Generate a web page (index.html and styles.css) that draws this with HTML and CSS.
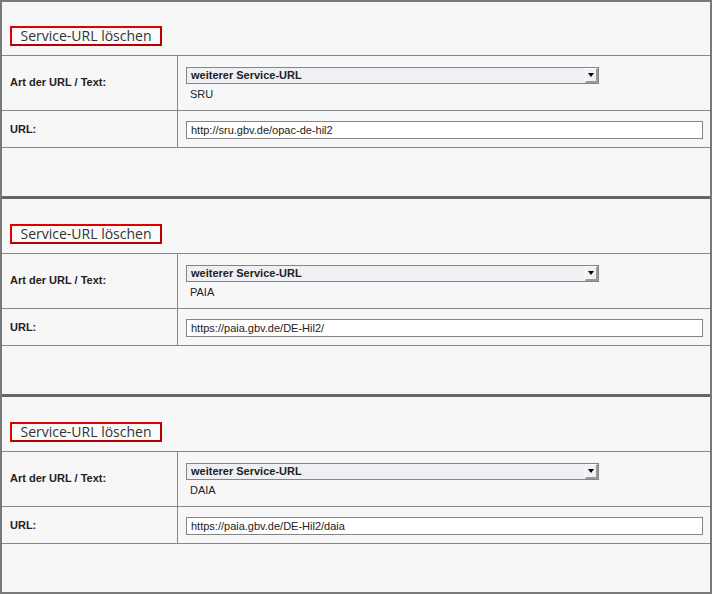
FILE: index.html
```html
<!DOCTYPE html>
<html>
<head>
<meta charset="utf-8">
<link rel="stylesheet" href="styles.css">
</head>
<body>
<div class="frame">
  <div class="section">
    <div class="btn-row"><button class="del-btn">Service-URL löschen</button></div>
    <div class="grid">
      <div class="label row1">Art der URL / Text:</div>
      <div class="field row1">
        <div class="select"><span class="select-text">weiterer Service-URL</span><span class="arrow"></span></div>
        <div class="subtext">SRU</div>
      </div>
      <div class="label row2">URL:</div>
      <div class="field row2"><div class="input">http://sru.gbv.de/opac-de-hil2</div></div>
    </div>
  </div>
  <div class="section">
    <div class="btn-row"><button class="del-btn">Service-URL löschen</button></div>
    <div class="grid">
      <div class="label row1">Art der URL / Text:</div>
      <div class="field row1">
        <div class="select"><span class="select-text">weiterer Service-URL</span><span class="arrow"></span></div>
        <div class="subtext">PAIA</div>
      </div>
      <div class="label row2">URL:</div>
      <div class="field row2"><div class="input">https://paia.gbv.de/DE-Hil2/</div></div>
    </div>
  </div>
  <div class="section last">
    <div class="btn-row"><button class="del-btn">Service-URL löschen</button></div>
    <div class="grid">
      <div class="label row1">Art der URL / Text:</div>
      <div class="field row1">
        <div class="select"><span class="select-text">weiterer Service-URL</span><span class="arrow"></span></div>
        <div class="subtext">DAIA</div>
      </div>
      <div class="label row2">URL:</div>
      <div class="field row2"><div class="input">https://paia.gbv.de/DE-Hil2/daia</div></div>
    </div>
  </div>
</div>
</body>
</html>
```
FILE: styles.css
```css
html, body {
  margin: 0;
  padding: 0;
  background: #f7f7f7;
}
.frame {
  width: 712px;
  height: 594px;
  box-sizing: border-box;
  border: 2px solid #7a7a7a;
  background: #f7f7f7;
  font-family: "Liberation Sans", Arial, sans-serif;
  overflow: hidden;
}
.section {
  height: 194px;
  border-bottom: 3px solid #666;
}
.section + .section {
  height: 195px;
}
.section.last {
  border-bottom: none;
}
.btn-row {
  padding: 24px 0 0 8px;
  height: 29px;
}
.section + .section .btn-row {
  padding-top: 25px;
}
.del-btn {
  display: block;
  width: 152px;
  height: 20px;
  margin: 0;
  padding: 0;
  box-sizing: border-box;
  border: 2px solid #e00000;
  border-right-color: #b80000;
  border-bottom-color: #b80000;
  background: #fbfbfb;
  font-family: "Open Sans", "Noto Sans", sans-serif;
  font-size: 14px;
  line-height: 16px;
  color: #333;
  text-align: center;
}
.grid {
  display: grid;
  grid-template-columns: 176px 1fr;
  grid-template-rows: 55px 37px;
  border-top: 1px solid #888;
}
.label {
  display: flex;
  align-items: center;
  padding-left: 8px;
  font-size: 11px;
  font-weight: bold;
  color: #222;
  border-right: 1px solid #888;
  border-bottom: 1px solid #888;
}
.row1.label { padding-bottom: 3px; }
.row2.label { padding-bottom: 1px; }
.field {
  border-bottom: 1px solid #888;
  padding-left: 8px;
  padding-right: 7px;
}
.row1.field {
  padding-top: 11px;
}
.row2.field {
  padding-top: 10px;
}
.select {
  position: relative;
  width: 413px;
  height: 17px;
  box-sizing: border-box;
  border: 1px solid #858585;
  background: #eef0f3;
  font-size: 11px;
  font-weight: bold;
  color: #222;
  line-height: 15px;
  padding-left: 4px;
}
.arrow {
  position: absolute;
  right: 0;
  top: 0;
  width: 13px;
  height: 15px;
  box-sizing: border-box;
  background: #eef0f3;
  border-left: 1px solid #ffffff;
  border-top: 1px solid #ffffff;
  border-right: 2px solid #9a9a9a;
  border-bottom: 2px solid #9a9a9a;
}
.arrow::after {
  content: "";
  position: absolute;
  left: 2px;
  top: 4px;
  border-left: 3.5px solid transparent;
  border-right: 3.5px solid transparent;
  border-top: 4px solid #000;
}
.subtext {
  font-size: 11px;
  color: #222;
  padding-left: 4px;
  margin-top: 4px;
  line-height: 13px;
}
.input {
  height: 18px;
  box-sizing: border-box;
  border: 1px solid #858585;
  background: #fff;
  font-size: 11px;
  color: #222;
  line-height: 16px;
  padding-left: 4px;
}
```
